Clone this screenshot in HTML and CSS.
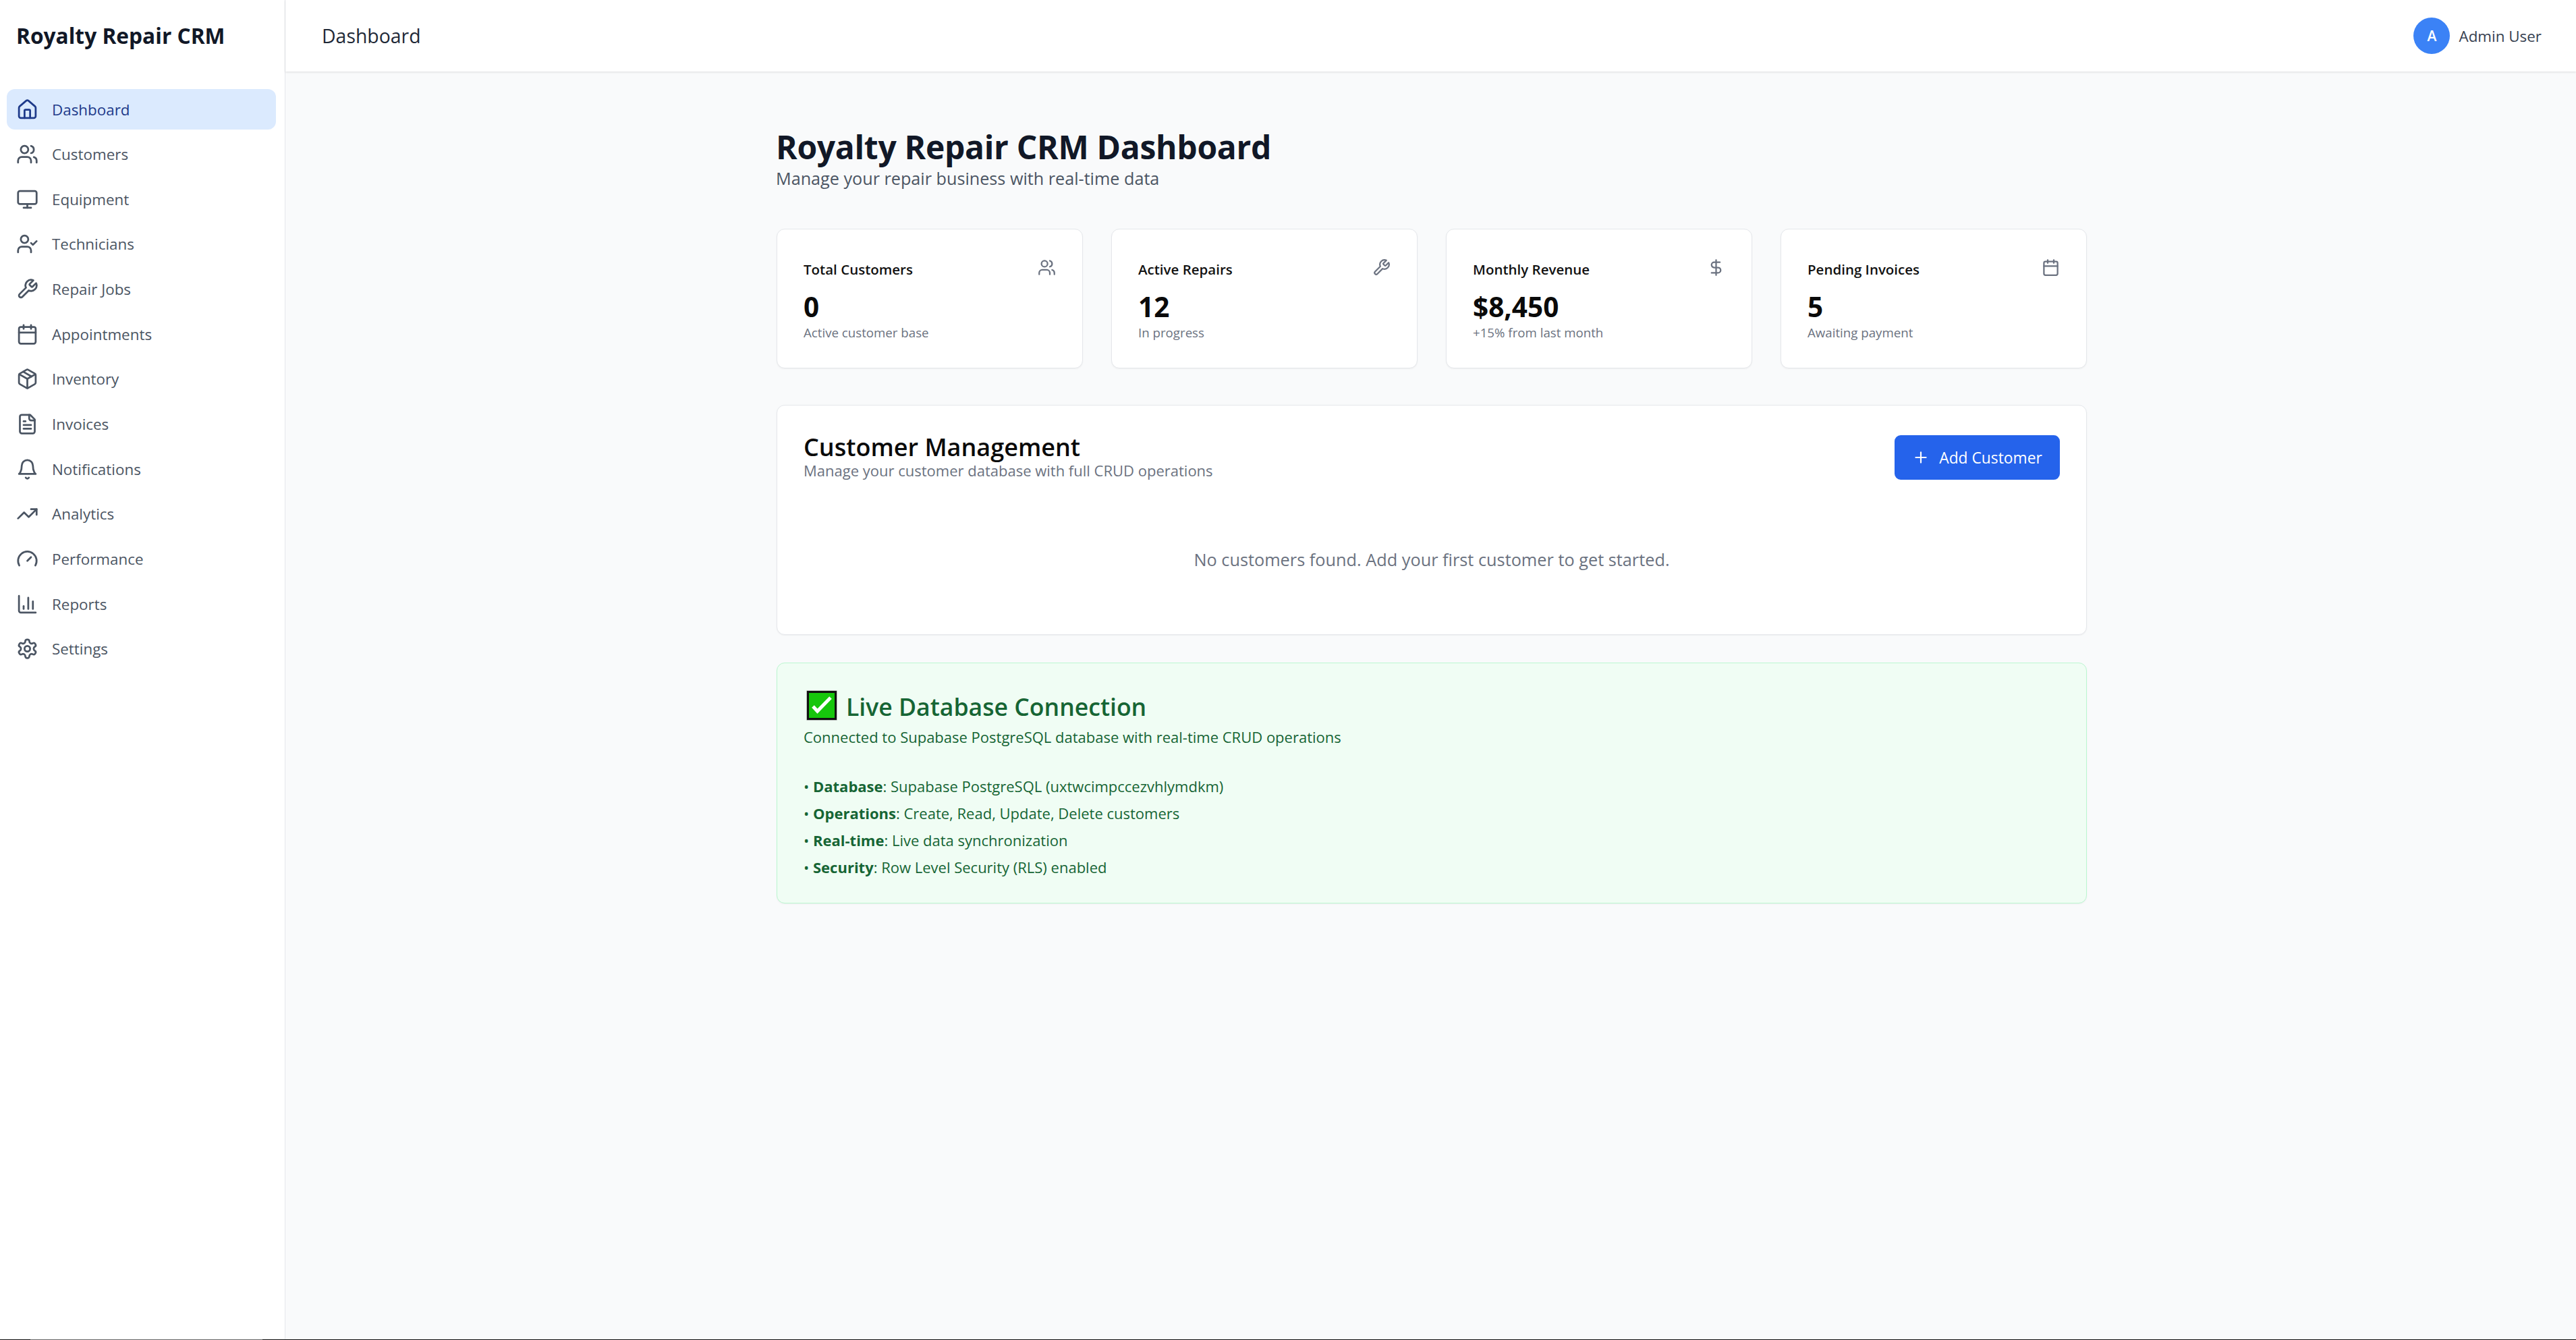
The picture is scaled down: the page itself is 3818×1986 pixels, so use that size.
FILE: index.html
```html
<!DOCTYPE html>
<html lang="en">
<head>
    <meta charset="UTF-8">
    <meta name="viewport" content="width=device-width, initial-scale=1.0">
    <title>Royalty Repair CRM</title>
    <link rel="stylesheet" href="styles.css">
</head>
<body>
    <div class="app">
        <!-- Sidebar -->
        <aside class="sidebar">
            <div class="brand">Royalty Repair CRM</div>
            <nav class="nav">
                <a class="nav-item active">
                    <svg class="icon nav-icon" viewBox="0 0 24 24"><path d="M15 21v-8a1 1 0 0 0-1-1h-4a1 1 0 0 0-1 1v8"/><path d="M3 10a2 2 0 0 1 .709-1.528l7-5.999a2 2 0 0 1 2.582 0l7 5.999A2 2 0 0 1 21 10v9a2 2 0 0 1-2 2H5a2 2 0 0 1-2-2z"/></svg>
                    <span>Dashboard</span>
                </a>
                <a class="nav-item">
                    <svg class="icon nav-icon" viewBox="0 0 24 24"><path d="M16 21v-2a4 4 0 0 0-4-4H6a4 4 0 0 0-4 4v2"/><circle cx="9" cy="7" r="4"/><path d="M22 21v-2a4 4 0 0 0-3-3.87"/><path d="M16 3.13a4 4 0 0 1 0 7.75"/></svg>
                    <span>Customers</span>
                </a>
                <a class="nav-item">
                    <svg class="icon nav-icon" viewBox="0 0 24 24"><rect x="2" y="3" width="20" height="14" rx="2"/><path d="M8 21h8"/><path d="M12 17v4"/></svg>
                    <span>Equipment</span>
                </a>
                <a class="nav-item">
                    <svg class="icon nav-icon" viewBox="0 0 24 24"><path d="M16 21v-2a4 4 0 0 0-4-4H6a4 4 0 0 0-4 4v2"/><circle cx="9" cy="7" r="4"/><path d="m16 11 2 2 4-4"/></svg>
                    <span>Technicians</span>
                </a>
                <a class="nav-item">
                    <svg class="icon nav-icon" viewBox="0 0 24 24"><path d="M14.7 6.3a1 1 0 0 0 0 1.4l1.6 1.6a1 1 0 0 0 1.4 0l3.77-3.77a6 6 0 0 1-7.94 7.94l-6.91 6.91a2.12 2.12 0 0 1-3-3l6.91-6.91a6 6 0 0 1 7.94-7.94l-3.76 3.76z"/></svg>
                    <span>Repair Jobs</span>
                </a>
                <a class="nav-item">
                    <svg class="icon nav-icon" viewBox="0 0 24 24"><path d="M8 2v4"/><path d="M16 2v4"/><rect x="3" y="4" width="18" height="18" rx="2"/><path d="M3 10h18"/></svg>
                    <span>Appointments</span>
                </a>
                <a class="nav-item">
                    <svg class="icon nav-icon" viewBox="0 0 24 24"><path d="m7.5 4.27 9 5.15"/><path d="M21 8a2 2 0 0 0-1-1.73l-7-4a2 2 0 0 0-2 0l-7 4A2 2 0 0 0 3 8v8a2 2 0 0 0 1 1.73l7 4a2 2 0 0 0 2 0l7-4A2 2 0 0 0 21 16Z"/><path d="m3.3 7 8.7 5 8.7-5"/><path d="M12 22V12"/></svg>
                    <span>Inventory</span>
                </a>
                <a class="nav-item">
                    <svg class="icon nav-icon" viewBox="0 0 24 24"><path d="M15 2H6a2 2 0 0 0-2 2v16a2 2 0 0 0 2 2h12a2 2 0 0 0 2-2V7Z"/><path d="M14 2v4a2 2 0 0 0 2 2h4"/><path d="M10 9H8"/><path d="M16 13H8"/><path d="M16 17H8"/></svg>
                    <span>Invoices</span>
                </a>
                <a class="nav-item">
                    <svg class="icon nav-icon" viewBox="0 0 24 24"><path d="M6 8a6 6 0 0 1 12 0c0 7 3 9 3 9H3s3-2 3-9"/><path d="M10.3 21a1.94 1.94 0 0 0 3.4 0"/></svg>
                    <span>Notifications</span>
                </a>
                <a class="nav-item">
                    <svg class="icon nav-icon" viewBox="0 0 24 24"><path d="M22 7 13.5 15.5 8.5 10.5 2 17"/><path d="M16 7h6v6"/></svg>
                    <span>Analytics</span>
                </a>
                <a class="nav-item">
                    <svg class="icon nav-icon" viewBox="0 0 24 24"><path d="m12 14 4-4"/><path d="M3.34 19a10 10 0 1 1 17.32 0"/></svg>
                    <span>Performance</span>
                </a>
                <a class="nav-item">
                    <svg class="icon nav-icon" viewBox="0 0 24 24"><path d="M3 3v16a2 2 0 0 0 2 2h16"/><path d="M18 17V9"/><path d="M13 17V5"/><path d="M8 17v-3"/></svg>
                    <span>Reports</span>
                </a>
                <a class="nav-item">
                    <svg class="icon nav-icon" viewBox="0 0 24 24"><path d="M12.22 2h-.44a2 2 0 0 0-2 2v.18a2 2 0 0 1-1 1.73l-.43.25a2 2 0 0 1-2 0l-.15-.08a2 2 0 0 0-2.73.73l-.22.38a2 2 0 0 0 .73 2.73l.15.1a2 2 0 0 1 1 1.72v.51a2 2 0 0 1-1 1.74l-.15.09a2 2 0 0 0-.73 2.73l.22.38a2 2 0 0 0 2.73.73l.15-.08a2 2 0 0 1 2 0l.43.25a2 2 0 0 1 1 1.73V20a2 2 0 0 0 2 2h.44a2 2 0 0 0 2-2v-.18a2 2 0 0 1 1-1.73l.43-.25a2 2 0 0 1 2 0l.15.08a2 2 0 0 0 2.73-.73l.22-.39a2 2 0 0 0-.73-2.73l-.15-.08a2 2 0 0 1-1-1.74v-.5a2 2 0 0 1 1-1.74l.15-.09a2 2 0 0 0 .73-2.73l-.22-.38a2 2 0 0 0-2.73-.73l-.15.08a2 2 0 0 1-2 0l-.43-.25a2 2 0 0 1-1-1.73V4a2 2 0 0 0-2-2z"/><circle cx="12" cy="12" r="3"/></svg>
                    <span>Settings</span>
                </a>
            </nav>
        </aside>

        <div class="main">
            <!-- Top bar -->
            <header class="topbar">
                <div class="topbar-title">Dashboard</div>
                <div class="user">
                    <div class="avatar">A</div>
                    <span class="user-name">Admin User</span>
                </div>
            </header>

            <main class="content">
                <div class="page">
                    <h1 class="page-title">Royalty Repair CRM Dashboard</h1>
                    <p class="page-sub">Manage your repair business with real-time data</p>

                    <!-- Stat cards -->
                    <div class="stats">
                        <div class="card stat">
                            <div class="stat-head">
                                <span class="stat-title">Total Customers</span>
                                <svg class="icon stat-icon" viewBox="0 0 24 24"><path d="M16 21v-2a4 4 0 0 0-4-4H6a4 4 0 0 0-4 4v2"/><circle cx="9" cy="7" r="4"/><path d="M22 21v-2a4 4 0 0 0-3-3.87"/><path d="M16 3.13a4 4 0 0 1 0 7.75"/></svg>
                            </div>
                            <div class="stat-value">0</div>
                            <div class="stat-note">Active customer base</div>
                        </div>
                        <div class="card stat">
                            <div class="stat-head">
                                <span class="stat-title">Active Repairs</span>
                                <svg class="icon stat-icon" viewBox="0 0 24 24"><path d="M14.7 6.3a1 1 0 0 0 0 1.4l1.6 1.6a1 1 0 0 0 1.4 0l3.77-3.77a6 6 0 0 1-7.94 7.94l-6.91 6.91a2.12 2.12 0 0 1-3-3l6.91-6.91a6 6 0 0 1 7.94-7.94l-3.76 3.76z"/></svg>
                            </div>
                            <div class="stat-value">12</div>
                            <div class="stat-note">In progress</div>
                        </div>
                        <div class="card stat">
                            <div class="stat-head">
                                <span class="stat-title">Monthly Revenue</span>
                                <svg class="icon stat-icon" viewBox="0 0 24 24"><path d="M12 2v20"/><path d="M17 5H9.5a3.5 3.5 0 0 0 0 7h5a3.5 3.5 0 0 1 0 7H6"/></svg>
                            </div>
                            <div class="stat-value">$8,450</div>
                            <div class="stat-note">+15% from last month</div>
                        </div>
                        <div class="card stat">
                            <div class="stat-head">
                                <span class="stat-title">Pending Invoices</span>
                                <svg class="icon stat-icon" viewBox="0 0 24 24"><path d="M8 2v4"/><path d="M16 2v4"/><rect x="3" y="4" width="18" height="18" rx="2"/><path d="M3 10h18"/></svg>
                            </div>
                            <div class="stat-value">5</div>
                            <div class="stat-note">Awaiting payment</div>
                        </div>
                    </div>

                    <!-- Customers -->
                    <section class="card customers">
                        <div class="customers-head">
                            <div>
                                <h2 class="customers-title">Customer Management</h2>
                                <p class="customers-sub">Manage your customer database with full CRUD operations</p>
                            </div>
                            <button class="add-btn">
                                <svg class="icon add-icon" viewBox="0 0 24 24"><path d="M5 12h14"/><path d="M12 5v14"/></svg>
                                Add Customer
                            </button>
                        </div>
                        <p class="empty">No customers found. Add your first customer to get started.</p>
                    </section>

                    <!-- Connection status -->
                    <section class="live">
                        <h2 class="live-title">
                            <svg class="check" viewBox="0 0 46 45"><rect x="0.5" y="0.5" width="45" height="44" fill="#8a8a8a"/><rect x="2.5" y="2.5" width="41" height="40" fill="#16c60c" stroke="#111" stroke-width="3"/><path d="M10 24l6.5 7L36 11" fill="none" stroke="#fff" stroke-width="5"/></svg>
                            Live Database Connection
                        </h2>
                        <p class="live-sub">Connected to Supabase PostgreSQL database with real-time CRUD operations</p>
                        <ul class="live-list">
                            <li>• <b>Database</b>: Supabase PostgreSQL (uxtwcimpccezvhlymdkm)</li>
                            <li>• <b>Operations</b>: Create, Read, Update, Delete customers</li>
                            <li>• <b>Real-time</b>: Live data synchronization</li>
                            <li>• <b>Security</b>: Row Level Security (RLS) enabled</li>
                        </ul>
                    </section>
                </div>
            </main>
        </div>
    </div>

    <!-- Window edge at the very bottom of the capture -->
    <div class="edge">
        <span class="edge-gap"></span>
        <span class="edge-thumb"></span>
    </div>
</body>
</html>
```

FILE: styles.css
```css
* {
    box-sizing: border-box;
}
html, body {
    margin: 0;
    height: 100%;
}
body {
    display: flex;
    flex-direction: column;
    overflow: hidden;
    font-family: "Open Sans", "Noto Sans", sans-serif;
    background: #f9fafb;
    color: #111827;
}

/* Layout */
.app {
    flex: 1;
    display: flex;
    min-height: 0;
}
.sidebar {
    width: 423px;
    flex-shrink: 0;
    background: #fff;
    border-right: 1px solid #e5e7eb;
    padding: 0 13px 0 10px;
}
.main {
    flex: 1;
    display: flex;
    flex-direction: column;
    min-width: 0;
}
.edge {
    display: flex;
    height: 1px;
    flex-shrink: 0;
    background: #0c0c0c;
}
.edge-gap {
    width: 45px;
}
.edge-thumb {
    width: 344px;
    background: #666;
}

/* Sidebar */
.brand {
    height: 105px;
    display: flex;
    align-items: center;
    padding-left: 14px;
    font-size: 31.7px;
    font-weight: 700;
    color: #111827;
}
.nav {
    display: flex;
    flex-direction: column;
    gap: 6.67px;
    margin-top: 27px;
}
.nav-item {
    display: flex;
    align-items: center;
    gap: 20px;
    height: 60px;
    padding-left: 14px;
    border-radius: 12px;
    font-size: 22.4px;
    font-weight: 500;
    color: #4b5563;
}
.nav-item.active {
    background: #dbeafe;
    color: #1e3a8a;
}
.icon {
    fill: none;
    stroke: currentColor;
    stroke-width: 2;
    stroke-linecap: round;
    stroke-linejoin: round;
    flex-shrink: 0;
}
.nav-icon {
    width: 33px;
    height: 33px;
}

/* Top bar */
.topbar {
    height: 106px;
    flex-shrink: 0;
    display: flex;
    align-items: center;
    justify-content: space-between;
    padding: 0 51px 0 54px;
    background: #fff;
    box-shadow: 0 1px 3px rgba(0, 0, 0, .12);
}
.topbar-title {
    font-size: 28.4px;
    font-weight: 500;
    color: #1f2937;
}
.user {
    display: flex;
    align-items: center;
    gap: 13px;
}
.avatar {
    width: 54px;
    height: 54px;
    border-radius: 50%;
    background: #3b82f6;
    color: #fff;
    display: flex;
    align-items: center;
    justify-content: center;
    font-size: 21px;
    font-weight: 600;
}
.user-name {
    font-size: 22.4px;
    font-weight: 500;
    color: #374151;
}

/* Content */
.content {
    flex: 1;
    padding: 84px 0 0 728px;
}
.page {
    width: 1942px;
}
.page-title {
    margin: 0 0 0 -1px;
    font-size: 48px;
    line-height: 56px;
    letter-spacing: -.3px;
    font-weight: 700;
    color: #111827;
}
.page-sub {
    margin: 0 0 0 -1px;
    font-size: 25.2px;
    line-height: 36px;
    color: #4b5563;
}
.card {
    background: #fff;
    border: 1px solid #e5e7eb;
    border-radius: 12px;
    box-shadow: 0 1px 2px rgba(0, 0, 0, .05);
}
.stats {
    display: grid;
    grid-template-columns: repeat(4, 1fr);
    gap: 42px;
    margin-top: 57px;
}
.stat {
    height: 207px;
    padding: 43px 39px 0;
}
.stat-head {
    display: flex;
    justify-content: space-between;
    align-items: flex-start;
}
.stat-title {
    font-size: 20.5px;
    line-height: 32px;
    font-weight: 600;
    color: #111;
}
.stat-icon {
    width: 27px;
    height: 27px;
    color: #6b7280;
}
.stat-value {
    margin-top: 16px;
    font-size: 40.5px;
    line-height: 48px;
    font-weight: 700;
    color: #0a0a0a;
}
.stat-note {
    font-size: 18.7px;
    line-height: 28px;
    color: #6b7280;
}

/* Customer panel */
.customers {
    height: 341px;
    margin-top: 54px;
    padding: 40px 39px;
}
.customers-head {
    display: flex;
    justify-content: space-between;
    align-items: flex-start;
}
.customers-title {
    margin: 0;
    font-size: 36px;
    line-height: 44px;
    font-weight: 600;
    color: #0a0a0a;
}
.customers-sub {
    margin: 0;
    font-size: 22px;
    line-height: 24px;
    color: #6b7280;
}
.add-btn {
    display: flex;
    align-items: center;
    gap: 14px;
    height: 66px;
    width: 245px;
    margin-top: 4px;
    justify-content: center;
    border: none;
    border-radius: 9px;
    background: #2563eb;
    color: #fff;
    font-family: inherit;
    font-size: 22.8px;
    font-weight: 500;
}
.add-icon {
    width: 26px;
    height: 26px;
}
.empty {
    margin: 100px 0 0;
    text-align: center;
    font-size: 25.3px;
    line-height: 36px;
    color: #6b7280;
}

/* Connection panel */
.live {
    height: 357px;
    margin-top: 41px;
    padding: 40px 39px;
    background: #f0fdf4;
    border: 1px solid #bbf7d0;
    border-radius: 12px;
    box-shadow: 0 1px 2px rgba(0, 0, 0, .05);
    color: #166534;
}
.live-title {
    display: flex;
    align-items: center;
    gap: 13px;
    margin: 0;
    font-size: 35.6px;
    line-height: 48px;
    font-weight: 600;
}
.check {
    width: 46px;
    height: 45px;
    margin: -4px 0 0 4px;
}
.live-sub {
    margin: 6px 0 0;
    font-size: 22px;
    line-height: 30px;
}
.live-list {
    list-style: none;
    margin: 38px 0 0;
    padding: 0;
    font-size: 22px;
    line-height: 40px;
}
```
